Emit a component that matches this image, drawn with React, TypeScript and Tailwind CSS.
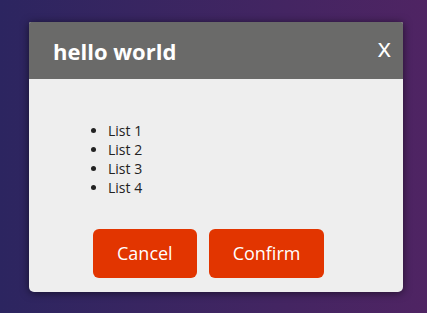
export default function App() {
  return (
    <div
      className="w-[427px] h-[313px] overflow-hidden bg-linear-to-r from-[#2c2560] to-[#4f2463] pt-[22px] pl-[29px]"
      style={{ fontFamily: '"Open Sans", "Noto Sans", sans-serif' }}
    >
      <div className="w-[374px] h-[270px] bg-[#eeeeee] rounded-b-[5px] rounded-t-[2px] shadow-[0_1px_8px_rgba(0,0,0,0.55)] overflow-hidden flex flex-col">
        <div className="h-[57px] bg-[#6a6a69] flex items-center justify-between pl-[24px] pr-[12px]">
          <h1 className="text-[22px] font-bold text-white leading-none">hello world</h1>
          <span className="text-[26px] font-medium text-white leading-none -mt-[8px]">x</span>
        </div>
        <div className="flex-1 pt-[42px]">
          <ul className="list-disc pl-[79px] text-[14px] leading-[19px] text-[#222]">
            <li>List 1</li>
            <li>List 2</li>
            <li>List 3</li>
            <li>List 4</li>
          </ul>
          <div className="flex gap-[12px] pl-[64px] mt-[32px]">
            <button className="h-[49px] px-[24px] rounded-[6px] bg-[#e23500] text-white text-[18px]">Cancel</button>
            <button className="h-[49px] px-[24px] rounded-[6px] bg-[#e23500] text-white text-[18px]">Confirm</button>
          </div>
        </div>
      </div>
    </div>
  );
}
